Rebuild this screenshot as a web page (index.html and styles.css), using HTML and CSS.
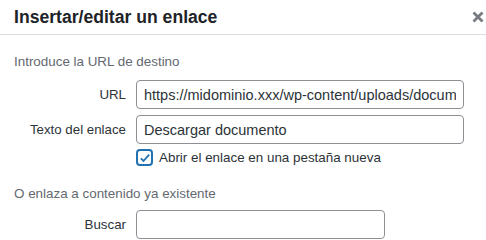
FILE: index.html
```html
<!DOCTYPE html>
<html lang="es">
<head>
  <meta charset="UTF-8">
  <title>Insertar/editar un enlace</title>
  <link rel="stylesheet" href="styles.css">
</head>
<body>
  <div class="modal">
    <div class="modal-title">
      <h1>Insertar/editar un enlace</h1>
      <button class="close-btn" aria-label="Cerrar">
        <svg viewBox="0 0 12 12" width="12" height="12">
          <path d="M1.5 1.5L10.5 10.5M10.5 1.5L1.5 10.5" stroke="#787c82" stroke-width="2.8"/>
        </svg>
      </button>
    </div>
    <div class="modal-body">
      <p class="howto">Introduce la URL de destino</p>
      <div class="field-row">
        <label class="field-label" for="url">URL</label>
        <input class="field-input" id="url" type="text" value="https://midominio.xxx/wp-content/uploads/documento.pdf">
      </div>
      <div class="field-row">
        <label class="field-label" for="text">Texto del enlace</label>
        <input class="field-input" id="text" type="text" value="Descargar documento">
      </div>
      <div class="check-row">
        <span class="checkbox">
          <svg viewBox="0 0 16 16" width="12" height="12">
            <path d="M2.5 8.5L6 12L13.5 3.5" fill="none" stroke="#2271b1" stroke-width="2.4"/>
          </svg>
        </span>
        <span class="check-text">Abrir el enlace en una pestaña nueva</span>
      </div>
      <p class="howto howto-second">O enlaza a contenido ya existente</p>
      <div class="field-row">
        <label class="field-label" for="search">Buscar</label>
        <input class="field-input search-input" id="search" type="text">
      </div>
    </div>
  </div>
</body>
</html>
```

FILE: styles.css
```css
* { box-sizing: border-box; }
body {
  margin: 0;
  padding: 0;
  background: #fff;
  font-family: "Liberation Sans", Arial, sans-serif;
  color: #2c3338;
}
.modal {
  width: 486px;
  height: 240px;
  overflow: hidden;
}
.modal-title {
  height: 35px;
  border-bottom: 1px solid #dcdcde;
  display: flex;
  align-items: center;
  justify-content: space-between;
  padding: 0 0 0 14px;
}
.modal-title h1 {
  margin: 0;
  font-size: 17.6px;
  font-weight: 700;
  color: #1d2327;
  line-height: 34px;
}
.close-btn {
  border: none;
  background: none;
  padding: 0;
  width: 17px;
  height: 34px;
  display: flex;
  align-items: center;
  justify-content: center;
}
.modal-body {
  padding: 19px 0 0 14px;
}
.howto {
  margin: 0;
  font-size: 13.4px;
  line-height: 16px;
  color: #646970;
}
.field-row {
  display: flex;
  align-items: center;
  margin-top: 6px;
}
.howto + .field-row {
  margin-top: 10px;
}
.field-label {
  width: 112px;
  text-align: right;
  margin-right: 10px;
  font-size: 13.3px;
  color: #2c3338;
}
.field-input {
  width: 328px;
  height: 29px;
  border: 1px solid #8c8f94;
  border-radius: 4px;
  padding: 0 7px;
  font-family: inherit;
  font-size: 14.5px;
  color: #2c3338;
  background: #fff;
}
.search-input {
  width: 249px;
}
.check-row {
  display: flex;
  align-items: center;
  margin: 5px 0 0 122px;
}
.checkbox {
  width: 17px;
  height: 17px;
  border: 2px solid #2271b1;
  border-radius: 4px;
  display: flex;
  align-items: center;
  justify-content: center;
  margin-right: 6px;
}
.check-text {
  font-size: 13.4px;
  color: #2c3338;
}
.howto-second {
  margin-top: 20px;
}
.howto-second + .field-row {
  margin-top: 8px;
}
```
